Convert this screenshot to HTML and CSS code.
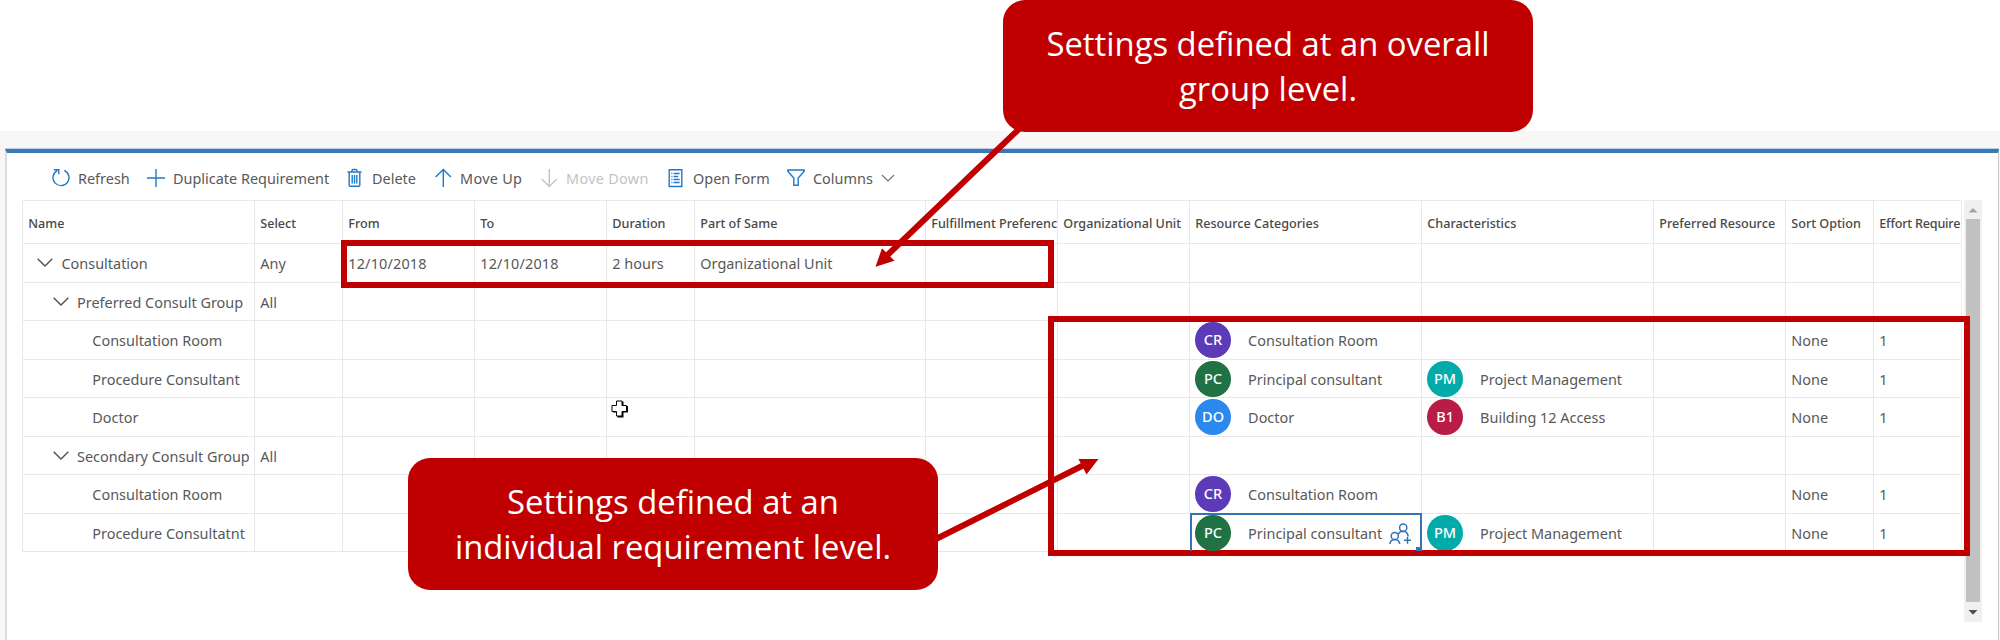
FILE: index.html
```html
<!DOCTYPE html>
<html lang="en">
<head>
<meta charset="utf-8">
<title>Requirement group</title>
<link rel="stylesheet" href="styles.css">
</head>
<body>
<div class="page">
  <main class="panel">
    <nav class="toolbar">
      <div class="tool w95"><svg width="18" height="20" viewBox="0 0 18 20"><path d="M12.200 2.300A8 8 0 1 1 5.200 2.600M1.800 1.700h5v4.600"/></svg><span>Refresh</span></div>
      <div class="tool w200"><svg width="18" height="20" viewBox="0 0 18 20"><path d="M9 1v18M0 10h18"/></svg><span>Duplicate Requirement</span></div>
      <div class="tool w88"><svg width="17" height="20" viewBox="0 0 17 20"><path d="M0.500 4h14M5 4V2.500q0-1 1-1h3q1 0 1 1V4M2.200 4v13.300q0 1 1 1h8.600q1 0 1-1V4M5.200 7v8.500M7.500 7v8.500M9.800 7v8.500"/></svg><span>Delete</span></div>
      <div class="tool w106"><svg width="17" height="20" viewBox="0 0 17 20"><path d="M8.300 19V1.500M0.700 9l7.600-7.600L15.900 9"/></svg><span class="wide">Move Up</span></div>
      <div class="tool w127 disabled"><svg width="17" height="20" viewBox="0 0 17 20"><path d="M8.300 1v17.300M0.700 11l7.600 7.600 7.600-7.600"/></svg><span class="wide">Move Down</span></div>
      <div class="tool w119"><svg width="17" height="20" viewBox="0 0 17 20"><path d="M1.200 1.700h12.600v16.800H1.200zM3.400 5.500h1M3.400 8.500h1M3.400 11.500h1M3.400 14.500h1M5.600 5.500h6M5.600 8.500h4.500M5.600 11.500h6M5.600 14.500h6"/></svg><span>Open Form</span></div>
      <div class="tool"><svg width="18" height="20" viewBox="0 0 18 20"><path d="M0.800 2h16.400v1.200L11.200 10v7.300H6.800V10L0.800 3.200z"/></svg><span>Columns</span><svg class="caret" width="14" height="8" viewBox="0 0 14 8"><path d="M1 1l6 6 6-6"/></svg></div>
    </nav>
    <div class="content">
      <div class="grid">
        <div class="row head"><div>Name</div><div>Select</div><div>From</div><div>To</div><div>Duration</div><div>Part of Same</div><div>Fulfillment Preferenc</div><div>Organizational Unit</div><div>Resource Categories</div><div>Characteristics</div><div>Preferred Resource</div><div>Sort Option</div><div class="tight">Effort Require</div></div>
        <div class="row"><div class="l1"><svg class="chev" width="16" height="9" viewBox="0 0 16 9"><path d="M0.700 0.800L8 8l7.300-7.200"/></svg><span>Consultation</span></div><div>Any</div><div class="date">12/10/2018</div><div class="date">12/10/2018</div><div>2 hours</div><div>Organizational Unit</div><div></div><div></div><div></div><div></div><div></div><div></div><div></div></div>
        <div class="row short"><div class="l2"><svg class="chev" width="16" height="9" viewBox="0 0 16 9"><path d="M0.700 0.800L8 8l7.300-7.200"/></svg><span>Preferred Consult Group</span></div><div>All</div><div></div><div></div><div></div><div></div><div></div><div></div><div></div><div></div><div></div><div></div><div></div></div>
        <div class="row"><div class="l3"><span>Consultation Room</span></div><div></div><div></div><div></div><div></div><div></div><div></div><div></div><div><b class="avatar purple">CR</b>Consultation Room</div><div></div><div></div><div>None</div><div>1</div></div>
        <div class="row short"><div class="l3"><span>Procedure Consultant</span></div><div></div><div></div><div></div><div></div><div></div><div></div><div></div><div><b class="avatar green">PC</b>Principal consultant</div><div><b class="avatar teal">PM</b>Project Management</div><div></div><div>None</div><div>1</div></div>
        <div class="row"><div class="l3"><span>Doctor</span></div><div></div><div></div><div></div><div></div><div></div><div></div><div></div><div><b class="avatar blue">DO</b>Doctor</div><div><b class="avatar crimson">B1</b>Building 12 Access</div><div></div><div>None</div><div>1</div></div>
        <div class="row short"><div class="l2"><svg class="chev" width="16" height="9" viewBox="0 0 16 9"><path d="M0.700 0.800L8 8l7.300-7.200"/></svg><span>Secondary Consult Group</span></div><div>All</div><div></div><div></div><div></div><div></div><div></div><div></div><div></div><div></div><div></div><div></div><div></div></div>
        <div class="row"><div class="l3"><span>Consultation Room</span></div><div></div><div></div><div></div><div></div><div></div><div></div><div></div><div><b class="avatar purple">CR</b>Consultation Room</div><div></div><div></div><div>None</div><div>1</div></div>
        <div class="row short"><div class="l3"><span>Procedure Consultatnt</span></div><div></div><div></div><div></div><div></div><div></div><div></div><div></div><div class="selected"><b class="avatar green">PC</b>Principal consultant<svg class="people" width="23" height="22" viewBox="0 0 23 22"><circle cx="14.200" cy="4.700" r="3.600"/><circle cx="5.800" cy="13" r="3.600"/><path d="M0.800 21q0.800-4.200 5-4.400 4.200 0.200 5 4.400M9.300 11.200q1.200-2.900 4.900-2.900 4.300 0.200 5 5M18.500 13.800v7M15 17.300h7"/></svg><i class="handle"></i></div><div><b class="avatar teal">PM</b>Project Management</div><div></div><div>None</div><div>1</div></div>
      </div>
      <div class="scrollbar">
        <svg width="18" height="19" viewBox="0 0 18 19"><path fill="#a3a3a3" d="M9 8l4.500 4.500h-9z"/></svg>
        <div class="thumb"></div>
        <svg width="18" height="20" viewBox="0 0 18 20"><path fill="#505050" d="M4.500 8h9L9 12.700z"/></svg>
      </div>
    </div>
  </main>
  <svg class="cursor" width="18" height="19" viewBox="0 0 18 19"><path fill="#000" d="M6.500 1.500h6v4.500h4.500v6.500h-4.500v5h-6v-5H2V6h4.500z"/><path fill="#fff" stroke="#000" d="M5.500 1h5.500v4.500h4.500v6H11V16H5.500v-4.500H1v-6h4.500z"/></svg>
  <div class="outline group-outline"></div>
  <div class="outline requirement-outline"></div>
  <svg class="arrows" width="2000" height="640" viewBox="0 0 2000 640">
    <path d="M1022 126L887 255.500M936 539L1083 465.500"/>
    <path class="tip" d="M875.500 266.800L882 248.200 894.500 260.800zM1098.500 459H1078.500L1086.500 474.500z"/>
  </svg>
  <div class="callout group-callout"><span>Settings defined at an overall</span><span>group level.</span></div>
  <div class="callout requirement-callout"><span>Settings defined at an</span><span>individual requirement level.</span></div>
</div>
</body>
</html>
```
FILE: styles.css
```css
* { box-sizing: border-box; }
body { margin: 0; background: #fff; }
.page {
  position: relative;
  width: 2000px;
  height: 640px;
  overflow: hidden;
  padding: 149px 1px 0 5px;
  background: linear-gradient(#fff 131px, #f8f7f5 131px);
  color: #585858;
  font: 14.45px/20px "Noto Sans", "Open Sans", sans-serif;
}
.panel {
  height: 491px;
  background: #fff;
  border-top: 4px solid #3a78b6;
  border-left: 2px solid #dcdcdc;
  border-right: 1px solid #c8c8c8;
  box-shadow: 0 -1px 0 #b9cfe3;
}
.toolbar { display: flex; align-items: center; height: 47px; padding: 3px 0 0 45px; }
.tool { display: flex; align-items: center; gap: 8px; white-space: nowrap; }
.tool svg { fill: none; stroke: #2079c8; stroke-width: 1.4; flex: none; }
.tool span { margin-top: 1px; }
.tool .caret { stroke: #777; stroke-width: 1.2; }
.tool .wide { letter-spacing: 0.3px; }
.disabled { color: #c3c3c3; }
.tool.disabled svg { stroke: #c3c3c3; }
.w95 { width: 95px; }
.w200 { width: 200px; }
.w88 { width: 88px; }
.w106 { width: 106px; }
.w127 { width: 127px; }
.w119 { width: 119px; }
.content { display: flex; gap: 2px; padding-left: 15px; }
.grid { width: 1940px; border-right: 1px solid #ebebeb; align-self: flex-start; border-bottom: 1px solid #e6e6e6; }
.row {
  display: grid;
  grid-template-columns: 232px 88px 132px 132px 88px 231px 132px 132px 232px 232px 132px 88px 88px;
  height: 39px;
}
.short { height: 38px; }
.row > div {
  display: flex;
  align-items: center;
  min-width: 0;
  overflow: hidden;
  white-space: nowrap;
  padding: 2px 0 0 5.3px;
  border-left: 1px solid #e8e8e8;
  border-top: 1px solid #e8e8e8;
}
.head { height: 43px; font-size: 12.6px; font-weight: 500; color: #484848; }
.row.head > div { padding-top: 3px; }
.row.head > .tight { letter-spacing: -0.2px; }
.row > .l1 { padding-left: 14px; }
.row > .l2 { padding-left: 30px; padding-right: 5px; }
.row > .l3 { padding-left: 69.3px; }
.row > .date { letter-spacing: 0.15px; }
.l2 span { overflow: hidden; }
.chev { fill: none; stroke: #505050; stroke-width: 1.4; margin: -3px 8px 0 0; flex: none; }
.l1 .chev { margin-right: 8.5px; }
.avatar {
  width: 35.500px;
  height: 35.500px;
  margin: -2px 17.3px 0 0;
  border-radius: 50%;
  flex: none;
  color: #fff;
  font-size: 14.5px;
  font-weight: 500;
  line-height: 35px;
  text-align: center;
}
.short .avatar { margin-top: -1px; }
.purple { background: #5d3ab8; }
.green { background: #207245; }
.teal { background: #00abaa; }
.blue { background: #2b88ee; }
.crimson { background: #b91c47; }
.row.short > .selected { position: relative; border: 2px solid #3573b3; border-bottom: 0; padding: 1px 0 0 3.3px; margin-left: 1px; margin-right: -1px; z-index: 1; }
.selected .avatar { margin-top: -1px; }
.people { fill: none; stroke: #3573b3; stroke-width: 1.5; margin-left: 7px; flex: none; }
.handle { position: absolute; right: -2px; bottom: 0; width: 6px; height: 4px; background: #3573b3; }
.scrollbar { width: 18px; height: 422px; background: #f0f0f0; display: flex; flex-direction: column; align-items: center; }
.scrollbar svg { flex: none; }
.thumb { width: 14px; flex: 1; background: #c1c1c1; }
.cursor { position: absolute; left: 611px; top: 400px; }
.outline { position: absolute; border: 6px solid #c00000; }
.group-outline { left: 341px; top: 240px; width: 713px; height: 48px; }
.requirement-outline { left: 1048px; top: 316px; width: 922px; height: 240px; }
.arrows { position: absolute; left: 0; top: 0; fill: none; stroke: #c00000; stroke-width: 6; }
.arrows .tip { fill: #c00000; stroke: none; }
.callout {
  position: absolute;
  width: 530px;
  height: 132px;
  border-radius: 22px;
  background: #c00000;
  color: #fff;
  font: 32.800px/45px "Open Sans", "Noto Sans", sans-serif;
  display: flex;
  flex-direction: column;
  align-items: center;
  justify-content: center;
  white-space: nowrap;
}
.group-callout { left: 1003px; top: 0; }
.requirement-callout { left: 408px; top: 458px; }
```
